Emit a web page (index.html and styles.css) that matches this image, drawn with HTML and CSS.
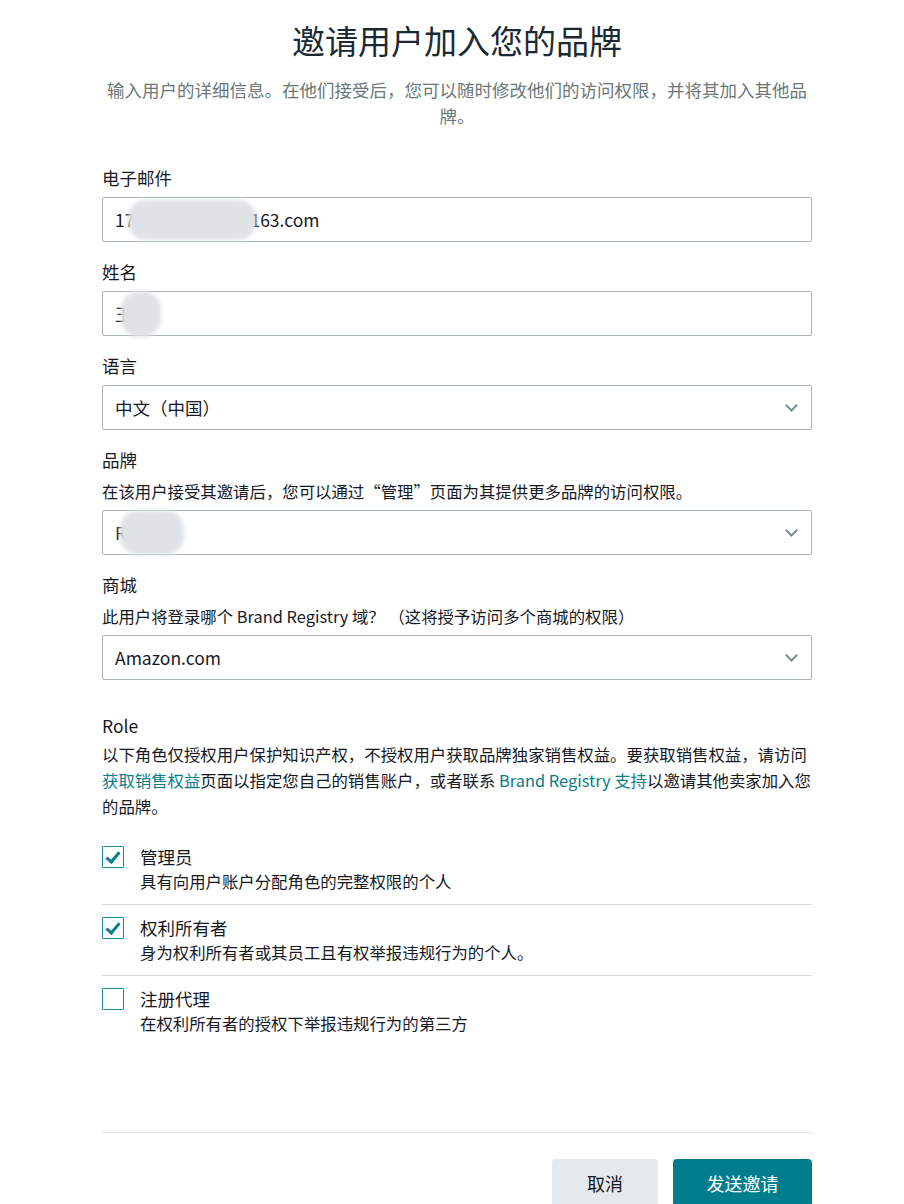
FILE: index.html
```html
<!DOCTYPE html>
<html lang="zh-CN">
<head>
  <meta charset="UTF-8" />
  <meta name="viewport" content="width=device-width, initial-scale=1.0" />
  <title>邀请用户加入您的品牌</title>
  <link rel="stylesheet" href="styles.css">
</head>
<body>
  <div class="page">
    <header class="intro">
      <h1 class="title">邀请用户加入您的品牌</h1>
      <p class="lead">输入用户的详细信息。在他们接受后，您可以随时修改他们的访问权限，并将其加入其他品牌。</p>
    </header>

    <form class="invite-form">
      <div class="field">
        <label class="field-label">电子邮件</label>
        <div class="input">17<span class="blur blur-email"></span>163.com</div>
      </div>

      <div class="field">
        <label class="field-label">姓名</label>
        <div class="input">王<span class="blur blur-name"></span></div>
      </div>

      <div class="field">
        <label class="field-label">语言</label>
        <div class="input select">中文（中国）<span class="chevron"></span></div>
      </div>

      <div class="field">
        <label class="field-label">品牌</label>
        <p class="field-help">在该用户接受其邀请后，您可以通过“管理”页面为其提供更多品牌的访问权限。</p>
        <div class="input select">R<span class="blur blur-brand"></span><span class="chevron"></span></div>
      </div>

      <div class="field">
        <label class="field-label">商城</label>
        <p class="field-help">此用户将登录哪个 Brand Registry 域？ （这将授予访问多个商城的权限）</p>
        <div class="input select">Amazon.com<span class="chevron"></span></div>
      </div>

      <div class="roles">
        <div class="field-label">Role</div>
        <p class="roles-note">以下角色仅授权用户保护知识产权，不授权用户获取品牌独家销售权益。要获取销售权益，请访问<a href="#">获取销售权益</a>页面以指定您自己的销售账户，或者联系 <a href="#">Brand Registry 支持</a>以邀请其他卖家加入您的品牌。</p>

        <ul class="role-list">
          <li class="role">
            <span class="checkbox checked"></span>
            <div class="role-text">
              <div class="role-name">管理员</div>
              <div class="role-desc">具有向用户账户分配角色的完整权限的个人</div>
            </div>
          </li>
          <li class="role">
            <span class="checkbox checked"></span>
            <div class="role-text">
              <div class="role-name">权利所有者</div>
              <div class="role-desc">身为权利所有者或其员工且有权举报违规行为的个人。</div>
            </div>
          </li>
          <li class="role">
            <span class="checkbox"></span>
            <div class="role-text">
              <div class="role-name">注册代理</div>
              <div class="role-desc">在权利所有者的授权下举报违规行为的第三方</div>
            </div>
          </li>
        </ul>
      </div>

      <footer class="actions">
        <button type="button" class="btn btn-cancel">取消</button>
        <button type="button" class="btn btn-primary">发送邀请</button>
      </footer>
    </form>
  </div>
</body>
</html>
```

FILE: styles.css
```css
body {
  margin: 0;
  font-family: "Noto Sans CJK SC", "Noto Sans", sans-serif;
  background: #fff;
  color: #16191f;
}
.page {
  width: 710px;
  margin-left: 102px;
}
.intro {
  text-align: center;
  padding-top: 18px;
}
.title {
  margin: 0;
  font-size: 33px;
  font-weight: 400;
  line-height: 44px;
  color: #1b2a32;
}
.lead {
  margin: 15px 0 0;
  font-size: 17.5px;
  line-height: 26px;
  color: #6c7778;
}
.invite-form {
  margin-top: 37px;
}
.field {
  margin-bottom: 18px;
}
.field-label {
  display: block;
  font-size: 17.5px;
  line-height: 24px;
}
.field-help {
  margin: 7px 0 0;
  font-size: 16.4px;
  line-height: 24px;
}
.input {
  position: relative;
  box-sizing: border-box;
  height: 45px;
  margin-top: 7px;
  padding: 0 12px;
  border: 1px solid #aab5b9;
  border-radius: 2px;
  display: flex;
  align-items: center;
  font-size: 17.5px;
  color: #16191f;
}
.blur {
  display: inline-block;
  height: 40px;
  background: #dfe3e5;
  border-radius: 18px;
  filter: blur(2px);
}
.blur-email {
  width: 128px;
  margin-left: -6px;
  margin-right: -6px;
}
.blur-name {
  width: 40px;
  margin-left: -12px;
  height: 46px;
}
.blur-brand {
  width: 64px;
  margin-left: -6px;
  height: 44px;
}
.chevron {
  position: absolute;
  right: 15px;
  top: 15px;
  width: 7px;
  height: 7px;
  border-right: 2px solid #7a8b92;
  border-bottom: 2px solid #7a8b92;
  transform: rotate(45deg);
}
.roles {
  margin-top: 34px;
}
.roles-note {
  margin: 3px 0 0;
  font-size: 16.4px;
  line-height: 26px;
}
.roles-note a {
  display: inline-block;
  color: #087d8c;
  text-decoration: none;
}
.role-list {
  list-style: none;
  margin: 15px 0 0;
  padding: 0;
}
.role {
  display: flex;
  gap: 16px;
  padding: 11px 0 11px;
  border-bottom: 1px solid #d5dbdb;
}
.role:last-child {
  border-bottom: none;
}
.checkbox {
  position: relative;
  box-sizing: border-box;
  width: 22px;
  height: 22px;
  margin-top: 1px;
  flex: none;
  border: 1.5px solid #1b8a99;
  border-radius: 1px;
}
.checkbox.checked::after {
  content: "";
  position: absolute;
  left: 6px;
  top: 2px;
  width: 5px;
  height: 11px;
  border-right: 3px solid #0c7d8c;
  border-bottom: 3px solid #0c7d8c;
  transform: rotate(40deg);
}
.role-name {
  font-size: 17.5px;
  line-height: 24px;
}
.role-desc {
  font-size: 16.4px;
  line-height: 24px;
}
.actions {
  margin-top: 86px;
  border-top: 1px solid #dde3e5;
  padding-top: 26px;
  display: flex;
  justify-content: flex-end;
  gap: 15px;
}
.btn {
  height: 48px;
  border: none;
  border-radius: 4px;
  font-family: inherit;
  font-size: 18px;
  padding: 0;
}
.btn-cancel {
  width: 106px;
  background: #e3e9ec;
  color: #16191f;
}
.btn-primary {
  width: 139px;
  background: #007e8e;
  color: #fff;
}
```
